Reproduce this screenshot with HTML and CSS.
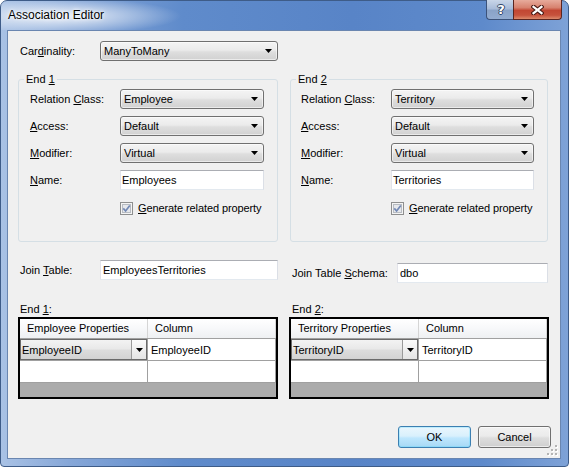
FILE: index.html
```html
<!DOCTYPE html>
<html>
<head>
<meta charset="utf-8">
<title>Association Editor</title>
<link rel="stylesheet" href="styles.css">
</head>
<body>
<div class="window">
  <div class="titlebar">
    <span class="title">Association Editor</span>
    <div class="caption-btns">
      <div class="cbtn help"><span class="q">?</span></div>
      <div class="cbtn close">
        <svg width="13" height="10" viewBox="0 0 13 10"><path d="M2.5 1.8 L10.5 8.2 M10.5 1.8 L2.5 8.2" stroke="#4a1a14" stroke-width="4.4" stroke-linecap="square" fill="none"/><path d="M2.5 1.8 L10.5 8.2 M10.5 1.8 L2.5 8.2" stroke="#fff" stroke-width="2.2" stroke-linecap="square" fill="none"/></svg>
      </div>
    </div>
  </div>
  <div class="client">
    <div class="card-row">
      <span class="card-lbl">Car<u>d</u>inality:</span>
      <div class="combo card-combo"><span class="txt">ManyToMany</span><svg class="arrow" width="7" height="4" viewBox="0 0 7 4"><polygon points="0,0 7,0 3.5,4" fill="#000"/></svg></div>
    </div>

    <div class="cols groups">
      <fieldset class="group">
        <legend>End <u>1</u></legend>
        <div class="form">
          <span>Relation <u>C</u>lass:</span>
          <div class="combo"><span class="txt">Employee</span><svg class="arrow" width="7" height="4" viewBox="0 0 7 4"><polygon points="0,0 7,0 3.5,4" fill="#000"/></svg></div>
          <span><u>A</u>ccess:</span>
          <div class="combo"><span class="txt">Default</span><svg class="arrow" width="7" height="4" viewBox="0 0 7 4"><polygon points="0,0 7,0 3.5,4" fill="#000"/></svg></div>
          <span><u>M</u>odifier:</span>
          <div class="combo"><span class="txt">Virtual</span><svg class="arrow" width="7" height="4" viewBox="0 0 7 4"><polygon points="0,0 7,0 3.5,4" fill="#000"/></svg></div>
          <span><u>N</u>ame:</span>
          <div class="tb">Employees</div>
          <div class="check-row">
            <span class="checkbox"><svg width="13" height="13" viewBox="0 0 13 13"><rect x="0.5" y="0.5" width="12" height="12" fill="#f4f4f4" stroke="#8e8f8f"/><rect x="2.5" y="2.5" width="8" height="8" fill="#e6e8ec" stroke="#b8bcc2"/><path d="M3.3 6.4 L5.6 9 L9.8 3.4" stroke="#7288b4" stroke-width="1.7" fill="none"/></svg></span>
            <span class="ck-txt"><u>G</u>enerate related property</span>
          </div>
        </div>
      </fieldset>
      <fieldset class="group g2">
        <legend>End <u>2</u></legend>
        <div class="form">
          <span>Relation <u>C</u>lass:</span>
          <div class="combo"><span class="txt">Territory</span><svg class="arrow" width="7" height="4" viewBox="0 0 7 4"><polygon points="0,0 7,0 3.5,4" fill="#000"/></svg></div>
          <span><u>A</u>ccess:</span>
          <div class="combo"><span class="txt">Default</span><svg class="arrow" width="7" height="4" viewBox="0 0 7 4"><polygon points="0,0 7,0 3.5,4" fill="#000"/></svg></div>
          <span><u>M</u>odifier:</span>
          <div class="combo"><span class="txt">Virtual</span><svg class="arrow" width="7" height="4" viewBox="0 0 7 4"><polygon points="0,0 7,0 3.5,4" fill="#000"/></svg></div>
          <span><u>N</u>ame:</span>
          <div class="tb">Territories</div>
          <div class="check-row">
            <span class="checkbox"><svg width="13" height="13" viewBox="0 0 13 13"><rect x="0.5" y="0.5" width="12" height="12" fill="#f4f4f4" stroke="#8e8f8f"/><rect x="2.5" y="2.5" width="8" height="8" fill="#e6e8ec" stroke="#b8bcc2"/><path d="M3.3 6.4 L5.6 9 L9.8 3.4" stroke="#7288b4" stroke-width="1.7" fill="none"/></svg></span>
            <span class="ck-txt"><u>G</u>enerate related property</span>
          </div>
        </div>
      </fieldset>
    </div>

    <div class="cols join-row">
      <div class="field">
        <span class="jlbl">Join <u>T</u>able:</span>
        <div class="tb join-tb">EmployeesTerritories</div>
      </div>
      <div class="field right">
        <span class="jlbl wide">Join Table <u>S</u>chema:</span>
        <div class="tb join-tb">dbo</div>
      </div>
    </div>

    <div class="cols ends">
      <div class="end">
        <div class="end-lbl">End <u>1</u>:</div>
        <div class="dgv">
          <div class="dgv-row dgv-head"><div class="hc">Employee Properties</div><div class="hc">Column</div></div>
          <div class="dgv-row dgv-body">
            <div class="cell">
              <div class="cell-combo"><span class="txt">EmployeeID</span><span class="cc-btn"><svg width="7" height="4" viewBox="0 0 7 4"><polygon points="0,0 7,0 3.5,4" fill="#000"/></svg></span></div>
            </div>
            <div class="cell val">EmployeeID</div>
          </div>
          <div class="dgv-row dgv-body"><div class="cell"></div><div class="cell"></div></div>
        </div>
      </div>
      <div class="end">
        <div class="end-lbl">End <u>2</u>:</div>
        <div class="dgv dgv2">
          <div class="dgv-row dgv-head"><div class="hc">Territory Properties</div><div class="hc">Column</div></div>
          <div class="dgv-row dgv-body">
            <div class="cell">
              <div class="cell-combo"><span class="txt">TerritoryID</span><span class="cc-btn"><svg width="7" height="4" viewBox="0 0 7 4"><polygon points="0,0 7,0 3.5,4" fill="#000"/></svg></span></div>
            </div>
            <div class="cell val">TerritoryID</div>
          </div>
          <div class="dgv-row dgv-body"><div class="cell"></div><div class="cell"></div></div>
        </div>
      </div>
    </div>

    <div class="buttons">
      <div class="btn default">OK</div>
      <div class="btn">Cancel</div>
    </div>

    <svg class="grip" width="11" height="11" viewBox="0 0 11 11">
      <g fill="#fff"><rect x="9" y="1" width="2" height="2"/><rect x="9" y="5" width="2" height="2"/><rect x="9" y="9" width="2" height="2"/><rect x="5" y="5" width="2" height="2"/><rect x="5" y="9" width="2" height="2"/><rect x="1" y="9" width="2" height="2"/></g>
      <g fill="#b4b4b4"><rect x="8" y="0" width="2" height="2"/><rect x="8" y="4" width="2" height="2"/><rect x="8" y="8" width="2" height="2"/><rect x="4" y="4" width="2" height="2"/><rect x="4" y="8" width="2" height="2"/><rect x="0" y="8" width="2" height="2"/></g>
    </svg>
  </div>
</div>
</body>
</html>
```

FILE: styles.css
```css
* { box-sizing: border-box; }
html, body { margin: 0; padding: 0; }
body {
  width: 569px;
  height: 467px;
  overflow: hidden;
  background: #ffffff;
  font-family: "Liberation Sans", Arial, sans-serif;
  font-size: 11px;
  color: #000;
}
u { text-underline-offset: 1px; }

.window {
  width: 569px;
  height: 467px;
  display: flex;
  flex-direction: column;
  border: 1px solid #3e5c88;
  border-radius: 7px 7px 4px 4px;
  padding: 0 7px 7px 6px;
  background:
    linear-gradient(90deg, #a9c2e5 0%, #86a7d8 12%, #5f8bcb 32%, #5884c7 62%, #5e8acb 85%, #7ea2d7 100%);
}

.titlebar {
  height: 29px;
  flex: none;
  display: flex;
  align-items: flex-start;
  justify-content: space-between;
  margin: 0 -7px 0 -6px;
  padding: 0 7px 0 7px;
  background: radial-gradient(ellipse 120px 18px at 60px 15px, rgba(255,255,255,0.85), rgba(255,255,255,0.35) 60%, rgba(255,255,255,0) 100%);
}
.title {
  margin-top: 7px;
  font-size: 12px;
  line-height: 14px;
  color: #000;
  text-shadow: 0 0 6px #fff, 0 0 3px #fff;
}
.caption-btns {
  display: flex;
  margin-top: -1px;
  margin-right: -1px;
}
.cbtn {
  height: 20px;
  display: flex;
  align-items: center;
  justify-content: center;
  border: 1px solid #3b527a;
  border-top: none;
}
.help {
  width: 27px;
  border-right: none;
  border-radius: 0 0 0 4px;
  background: linear-gradient(#c9d6e8 0%, #a9bcd9 45%, #8aa3c8 55%, #93acd1 100%);
}
.q {
  font-family: "DejaVu Sans", sans-serif;
  font-weight: bold;
  font-size: 13px;
  color: #fff;
  line-height: 14px;
  margin-left: 2px;
  text-shadow: 1px 0 #2f4566, -1px 0 #2f4566, 0 1px #2f4566, 0 -1px #2f4566;
}
.close {
  width: 49px;
  border-color: #5a2520;
  border-radius: 0 0 4px 0;
  background: linear-gradient(#e7ab9c 0%, #d7826f 40%, #c24733 55%, #c6523c 80%, #dc8a6c 100%);
}

.client {
  flex: 1;
  position: relative;
  display: flex;
  flex-direction: column;
  background: #f0f0f0;
  border: 1px solid #6a86b0;
  padding: 10px 12px 0 10px;
}

.card-row {
  display: flex;
  align-items: center;
  height: 20px;
}
.card-lbl {
  width: 80px;
  margin-left: 2px;
}
.card-combo { width: 178px; padding-right: 8px; padding-left: 4px; }

.combo {
  height: 20px;
  display: flex;
  align-items: center;
  padding: 0 5px 0 3px;
  border: 1px solid #707070;
  border-radius: 3px;
  background: linear-gradient(#f4f4f4 0%, #ebebeb 45%, #dedede 55%, #d1d1d1 100%);
  box-shadow: inset 0 0 0 1px rgba(255,255,255,0.55);
}
.combo .txt { flex: 1; white-space: nowrap; }
.arrow { flex: none; display: block; }

.tb {
  height: 20px;
  display: flex;
  align-items: center;
  padding-left: 1px;
  background: #fff;
  border: 1px solid;
  border-color: #abadb3 #dbdfe6 #e3e9ef #e2e3ea;
}

.cols {
  display: grid;
  grid-template-columns: 260px 258px;
  column-gap: 12px;
}
.groups { margin-top: 11px; }

.group {
  margin: 0;
  padding: 0;
  min-width: 0;
  border: 1px solid #d5dfe5;
  border-radius: 3px;
}
.group legend {
  margin-left: 5px;
  padding: 0 2px;
  line-height: 14px;
  font-size: 11px;
}
.form {
  display: grid;
  grid-template-columns: 90px 1fr;
  grid-auto-rows: 20px;
  row-gap: 7px;
  align-items: center;
  padding: 3px 13px 24px 11px;
}
.g2 .form { padding-left: 10px; }
.check-row {
  grid-column: 2;
  display: flex;
  align-items: center;
  margin-top: 2px;
  white-space: nowrap;
}
.ck-txt { white-space: nowrap; letter-spacing: -0.1px; }
.checkbox { display: flex; flex: none; width: 13px; height: 13px; margin-right: 5px; }

.join-row { margin-top: 18px; }
.field { display: flex; align-items: center; height: 20px; }
.field.right { margin-top: 3px; }
.jlbl { width: 80px; margin-left: 2px; flex: none; }
.jlbl.wide { width: 105px; }
.join-tb { flex: 1; padding-left: 2px; }

.ends { margin-top: 19px; }
.end-lbl { line-height: 14px; padding-left: 2px; margin-bottom: 1px; }
.dgv {
  height: 82px;
  border: 2px solid #000;
  background: #ababab;
  display: flex;
  flex-direction: column;
}
.dgv2 { margin-left: -1px; margin-right: -1px; }
.dgv-row {
  display: grid;
  grid-template-columns: 128px 1fr;
}
.dgv-head {
  height: 20px;
  background: linear-gradient(#ffffff 0%, #f7f8fa 50%, #eef0f2 100%);
  border-bottom: 1px solid #a0a0a0;
}
.hc {
  line-height: 19px;
  padding-left: 7px;
  border-right: 1px solid #d5d5d5;
  white-space: nowrap;
}
.dgv-body {
  height: 22px;
  background: #fff;
  border-bottom: 1px solid #a0a0a0;
}
.cell {
  border-right: 1px solid #a0a0a0;
  display: flex;
  align-items: center;
}
.cell.val { padding-left: 3px; }
.cell-combo {
  width: 100%;
  height: 100%;
  display: flex;
  align-items: center;
  border: 1px solid #6a6a6a;
  background: linear-gradient(#f3f3f3 0%, #e9e9e9 45%, #dcdcdc 55%, #d2d2d2 100%);
  padding-left: 1px;
}
.cell-combo .txt { flex: 1; white-space: nowrap; }
.cc-btn {
  width: 15px;
  height: 100%;
  display: flex;
  align-items: center;
  justify-content: center;
  border-left: 1px solid #9a9a9a;
  background: linear-gradient(#fbfbfb, #e4e4e4);
}

.buttons {
  display: flex;
  justify-content: flex-end;
  gap: 7px;
  margin-top: 27px;
  margin-right: -3px;
}
.btn {
  width: 73px;
  height: 22px;
  display: flex;
  align-items: center;
  justify-content: center;
  border: 1px solid #707070;
  border-radius: 3px;
  background: linear-gradient(#f2f2f2 0%, #ebebeb 45%, #dddddd 55%, #cfcfcf 100%);
  box-shadow: inset 0 0 0 1px rgba(255,255,255,0.6);
}
.btn.default {
  border-color: #3c7fb1;
  background: linear-gradient(#eaf6fd 0%, #d9f0fc 45%, #bee6fd 55%, #a7d9f5 100%);
  box-shadow: inset 0 0 0 1px #48d7ff44;
}

.grip {
  position: absolute;
  right: 2px;
  bottom: 2px;
}
```
